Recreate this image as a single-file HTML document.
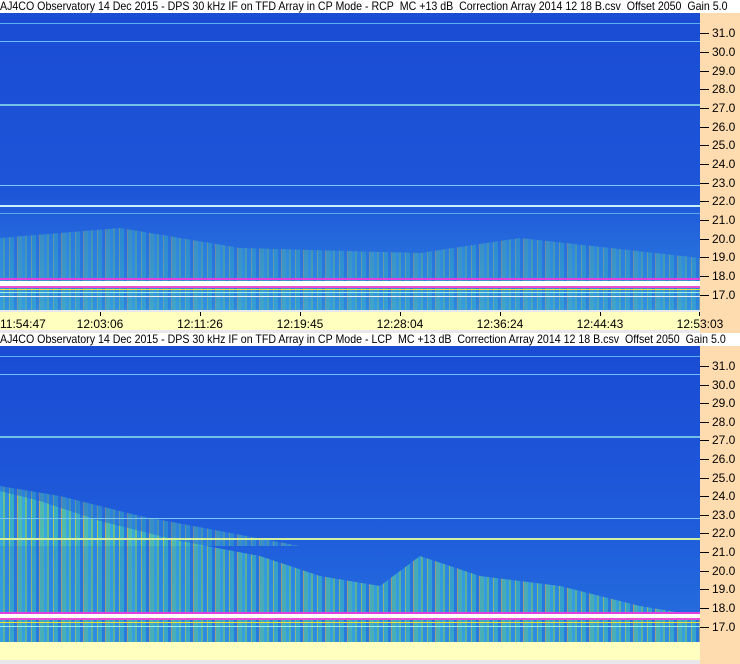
<!DOCTYPE html>
<html><head><meta charset="utf-8"><style>
body{margin:0;width:740px;height:664px;overflow:hidden;background:#e8e8ec;font-family:"Liberation Sans",sans-serif;position:relative}
.a{position:absolute}
.t{position:absolute;left:0;width:740px;height:13px;background:#fff;font-size:12px;line-height:13px;color:#000;white-space:nowrap;overflow:hidden}
.t span{display:inline-block;transform:scaleX(0.885);transform-origin:0 0}
.sp{position:absolute;left:0;width:700px;overflow:hidden;background:#1d55d8}
.ax{position:absolute;left:700px;width:40px;background:#ffdcb0;top:13px;height:651px}
.tk{position:absolute;left:700px;font-size:12px;line-height:12px;white-space:nowrap}
.tk i{display:inline-block;width:9px;height:1px;background:#000;vertical-align:middle;margin-right:3px}
.tm{position:absolute;top:312px;height:18px;left:0;width:700px;background:#ffffc0;font-size:12px}
.tm span{position:absolute;top:5px;transform:translateX(-50%)}
.tm b{position:absolute;top:0;width:1px;height:4px;background:#000}
.ln{position:absolute;left:0;width:700px}
.grn{position:absolute;background:repeating-linear-gradient(90deg,#3ec0e0 0 3px,#80e070 3px 5px,#30a0e8 5px 9px,#d0e840 9px 10px,#40c8c0 10px 14px,#2a80e0 14px 17px,#f0c040 17px 18px,#60d8a0 18px 22px);}
</style></head><body>
<div class="t" style="top:0"><span>AJ4CO Observatory 14 Dec 2015 - DPS 30 kHz IF on TFD Array in CP Mode - RCP&nbsp; MC +13 dB&nbsp; Correction Array 2014 12 18 B.csv&nbsp; Offset 2050&nbsp; Gain 5.0</span></div>
<div class="ax"></div>

<div class="sp" style="top:13px;height:297px;background:linear-gradient(180deg,#1a4cd4 0%,#1d55d8 60%,#2466dc 75%,#2a78dc 90%,#2f8ade 100%)">
 <div class="ln" style="top:10px;height:1px;background:#5ab0f0"></div>
 <div class="ln" style="top:28px;height:1px;background:#6cc0f4"></div>
 <div class="ln" style="top:91px;height:2px;background:#70c0e8"></div>
 <div class="ln" style="top:172px;height:1px;background:#80c8f0"></div>
 <div class="ln" style="top:192px;height:2px;background:#c8f0ff"></div>
 <div class="ln" style="top:200px;height:1px;background:#5aa8e8"></div>
 <div class="grn" style="left:0;top:215px;width:700px;height:82px;opacity:.35;clip-path:polygon(0 10px,120px 0,240px 20px,420px 25px,520px 10px,700px 30px,700px 82px,0 82px)"></div>
 <div class="ln" style="top:265px;height:2px;background:#e040e0"></div>
 <div class="ln" style="top:268px;height:5px;background:#ffffff"></div>
 <div class="ln" style="top:273px;height:2px;background:#e850d0"></div>
 <div class="ln" style="top:276px;height:1px;background:#f0e040"></div>
 <div class="ln" style="top:279px;height:1px;background:#a0f0f0"></div>
 <div class="ln" style="top:283px;height:1px;background:#f0f0ff"></div>
</div>
<div class="tk" style="top:27px"><i></i>31.0</div>
<div class="tk" style="top:46px"><i></i>30.0</div>
<div class="tk" style="top:65px"><i></i>29.0</div>
<div class="tk" style="top:83px"><i></i>28.0</div>
<div class="tk" style="top:102px"><i></i>27.0</div>
<div class="tk" style="top:121px"><i></i>26.0</div>
<div class="tk" style="top:139px"><i></i>25.0</div>
<div class="tk" style="top:158px"><i></i>24.0</div>
<div class="tk" style="top:177px"><i></i>23.0</div>
<div class="tk" style="top:195px"><i></i>22.0</div>
<div class="tk" style="top:214px"><i></i>21.0</div>
<div class="tk" style="top:233px"><i></i>20.0</div>
<div class="tk" style="top:251px"><i></i>19.0</div>
<div class="tk" style="top:270px"><i></i>18.0</div>
<div class="tk" style="top:289px"><i></i>17.0</div>

<div class="tm">
 <b style="left:100px"></b><b style="left:200px"></b><b style="left:300px"></b><b style="left:400px"></b><b style="left:500px"></b><b style="left:600px"></b><b style="left:699px"></b>
 <span style="left:0;transform:none">11:54:47</span>
 <span style="left:100px">12:03:06</span><span style="left:200px">12:11:26</span><span style="left:300px">12:19:45</span><span style="left:400px">12:28:04</span><span style="left:500px">12:36:24</span><span style="left:600px">12:44:43</span><span style="left:700px">12:53:03</span>
</div>

<div class="t" style="top:333px"><span>AJ4CO Observatory 14 Dec 2015 - DPS 30 kHz IF on TFD Array in CP Mode - LCP&nbsp; MC +13 dB&nbsp; Correction Array 2014 12 18 B.csv&nbsp; Offset 2050&nbsp; Gain 5.0</span></div>

<div class="sp" style="top:346px;height:296px;background:linear-gradient(180deg,#1a4cd4 0%,#1d55d8 40%,#2060dc 70%,#2670dc 100%)">
 <div class="ln" style="top:10px;height:1px;background:#5ab0f0"></div>
 <div class="ln" style="top:28px;height:1px;background:#6cc0f4"></div>
 <div class="ln" style="top:90px;height:2px;background:#70c0e8"></div>
 <div class="grn" style="left:0;top:140px;width:700px;height:156px;opacity:.6;clip-path:polygon(0 5px,40px 15px,100px 35px,180px 55px,260px 70px,320px 90px,380px 100px,420px 70px,480px 90px,560px 100px,640px 120px,700px 130px,700px 156px,0 156px)"></div>
 <div class="grn" style="left:0;top:140px;width:300px;height:60px;opacity:.4;clip-path:polygon(0 0,60px 10px,140px 30px,300px 60px,0 60px)"></div>
 <div class="ln" style="top:192px;height:2px;background:#d0f0a0"></div>
 <div class="ln" style="top:172px;height:1px;background:#80c8f0"></div>
 <div class="ln" style="top:266px;height:2px;background:#e040e0"></div>
 <div class="ln" style="top:268px;height:4px;background:#ffffff"></div>
 <div class="ln" style="top:272px;height:2px;background:#e850d0"></div>
 <div class="ln" style="top:276px;height:1px;background:#f0e040"></div>
 <div class="ln" style="top:280px;height:1px;background:#a0f0f0"></div>
</div>
<div class="tk" style="top:360px"><i></i>31.0</div>
<div class="tk" style="top:379px"><i></i>30.0</div>
<div class="tk" style="top:397px"><i></i>29.0</div>
<div class="tk" style="top:416px"><i></i>28.0</div>
<div class="tk" style="top:434px"><i></i>27.0</div>
<div class="tk" style="top:453px"><i></i>26.0</div>
<div class="tk" style="top:472px"><i></i>25.0</div>
<div class="tk" style="top:490px"><i></i>24.0</div>
<div class="tk" style="top:509px"><i></i>23.0</div>
<div class="tk" style="top:527px"><i></i>22.0</div>
<div class="tk" style="top:546px"><i></i>21.0</div>
<div class="tk" style="top:565px"><i></i>20.0</div>
<div class="tk" style="top:583px"><i></i>19.0</div>
<div class="tk" style="top:602px"><i></i>18.0</div>
<div class="tk" style="top:621px"><i></i>17.0</div>

<div class="a" style="top:642px;left:0;width:700px;height:18px;background:#ffffc0"></div>
</body></html>
